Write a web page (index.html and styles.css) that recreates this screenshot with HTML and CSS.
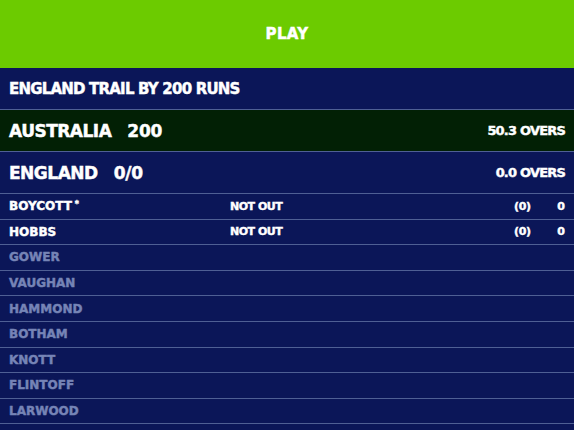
FILE: index.html
```html
<!DOCTYPE html>
<html lang="en">

<head>
    <meta charset="UTF-8">
    <meta name="viewport" content="width=device-width, initial-scale=1.0">
    <title>Scorecard</title>
    <link rel="stylesheet" href="styles.css">
</head>

<body>
    <!-- Tombol main -->
    <div class="play-bar">PLAY</div>

    <div class="status-row">ENGLAND TRAIL BY 200 RUNS</div>

    <!-- Ringkasan tim -->
    <div class="team-row batting-done">
        <span class="team-name">AUSTRALIA</span>
        <span class="team-score">200</span>
        <span class="overs">50.3 OVERS</span>
    </div>
    <div class="team-row">
        <span class="team-name">ENGLAND</span>
        <span class="team-score">0/0</span>
        <span class="overs">0.0 OVERS</span>
    </div>

    <!-- Daftar pemukul -->
    <div class="batsmen">
        <div class="bat-row active">
            <span class="bat-name">BOYCOTT<sup>*</sup></span>
            <span class="bat-status">NOT OUT</span>
            <span class="bat-balls">(0)</span>
            <span class="bat-runs">0</span>
        </div>
        <div class="bat-row active">
            <span class="bat-name">HOBBS</span>
            <span class="bat-status">NOT OUT</span>
            <span class="bat-balls">(0)</span>
            <span class="bat-runs">0</span>
        </div>
        <div class="bat-row"><span class="bat-name">GOWER</span></div>
        <div class="bat-row"><span class="bat-name">VAUGHAN</span></div>
        <div class="bat-row"><span class="bat-name">HAMMOND</span></div>
        <div class="bat-row"><span class="bat-name">BOTHAM</span></div>
        <div class="bat-row"><span class="bat-name">KNOTT</span></div>
        <div class="bat-row"><span class="bat-name">FLINTOFF</span></div>
        <div class="bat-row"><span class="bat-name">LARWOOD</span></div>
    </div>
</body>

</html>
```

FILE: styles.css
```css
body {
    font-family: "DejaVu Sans", Verdana, sans-serif;
    font-weight: bold;
    background-color: #0b1658;
    color: #ffffff;
    margin: 0;
    padding: 0;
    height: 430px;
    overflow: hidden;
    -webkit-text-stroke: 0.45px currentColor;
}

.play-bar {
    height: 68px;
    background-color: #6ccb00;
    display: flex;
    justify-content: center;
    align-items: center;
    font-size: 15px;
    letter-spacing: 0.3px;
}

.status-row {
    height: 41px;
    border-bottom: 1px solid #4f5f94;
    display: flex;
    align-items: center;
    padding: 0 9px;
    font-size: 15px;
    letter-spacing: -0.8px;
}

.team-row {
    height: 41px;
    border-bottom: 1px solid #4f5f94;
    display: flex;
    align-items: center;
    padding: 0 9px;
    font-size: 17px;
}

.team-row.batting-done {
    background-color: #022005;
}

.team-name {
    letter-spacing: -0.5px;
}

.team-score {
    margin-left: 16px;
    letter-spacing: -0.2px;
}

.overs {
    margin-left: auto;
    font-size: 13px;
    letter-spacing: -0.8px;
}

.bat-row {
    height: 24.6px;
    border-bottom: 1px solid #4f5f94;
    display: grid;
    grid-template-columns: 221px 1fr 43px 8px;
    align-items: center;
    padding: 0 9px;
    font-size: 12px;
    color: #7684b6;
}

.bat-row.active {
    color: #ffffff;
}

.bat-name sup {
    font-size: 8px;
    margin-left: 3px;
    vertical-align: 3px;
    line-height: 0;
}

.bat-status {
    font-size: 11px;
    letter-spacing: -0.5px;
}

.bat-balls {
    font-size: 11px;
    letter-spacing: -0.3px;
}

.bat-runs {
    font-size: 11px;
    text-align: right;
}
```
